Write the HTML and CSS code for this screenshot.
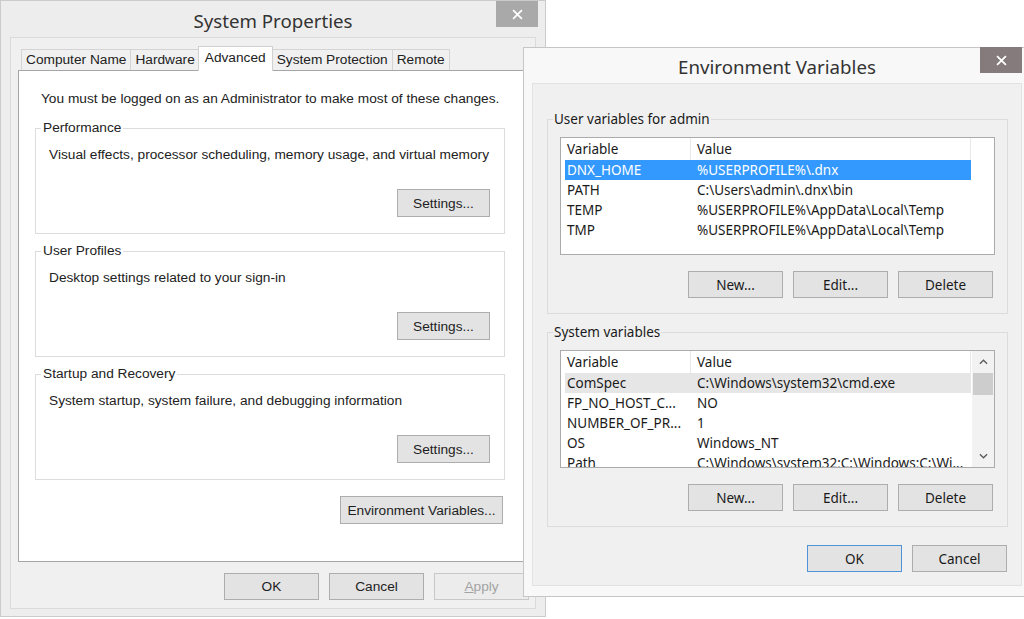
FILE: index.html
```html
<!DOCTYPE html>
<html lang="en">
<head>
<meta charset="utf-8">
<title>System Properties - Environment Variables</title>
<link rel="stylesheet" href="styles.css">
</head>
<body>
<div class="desktop">

  <section class="window sp">
    <header class="titlebar">
      <span></span>
      <h1 class="title">System Properties</h1>
      <button class="close" aria-label="Close"><svg viewBox="0 0 10 10"><path d="M1 1L9 9M9 1L1 9"/></svg></button>
    </header>
    <div class="client">
      <div class="tabs">
        <span class="tab">Computer Name</span>
        <span class="tab">Hardware</span>
        <span class="tab active">Advanced</span>
        <span class="tab">System Protection</span>
        <span class="tab">Remote</span>
      </div>
      <div class="panel">
        <p class="note">You must be logged on as an Administrator to make most of these changes.</p>
        <fieldset class="group">
          <legend>Performance</legend>
          <p>Visual effects, processor scheduling, memory usage, and virtual memory</p>
          <div class="group-actions"><button class="btn settings">Settings...</button></div>
        </fieldset>
        <fieldset class="group">
          <legend>User Profiles</legend>
          <p>Desktop settings related to your sign-in</p>
          <div class="group-actions"><button class="btn settings">Settings...</button></div>
        </fieldset>
        <fieldset class="group">
          <legend>Startup and Recovery</legend>
          <p>System startup, system failure, and debugging information</p>
          <div class="group-actions"><button class="btn settings">Settings...</button></div>
        </fieldset>
        <div class="env-row"><button class="btn env">Environment Variables...</button></div>
      </div>
      <div class="footer">
        <button class="btn">OK</button>
        <button class="btn">Cancel</button>
        <button class="btn disabled"><u>A</u>pply</button>
      </div>
    </div>
  </section>

  <section class="window ev">
    <header class="titlebar">
      <span></span>
      <h1 class="title">Environment Variables</h1>
      <button class="close" aria-label="Close"><svg viewBox="0 0 10 10"><path d="M1 1L9 9M9 1L1 9"/></svg></button>
    </header>
    <div class="client">
      <fieldset class="vgroup">
        <legend>User variables for admin</legend>
        <div class="list">
          <div class="list-body">
            <div class="list-head"><span class="c1">Variable</span><span class="c2">Value</span></div>
            <div class="row sel"><span class="c1">DNX_HOME</span><span class="c2">%USERPROFILE%\.dnx</span></div>
            <div class="row"><span class="c1">PATH</span><span class="c2">C:\Users\admin\.dnx\bin</span></div>
            <div class="row"><span class="c1">TEMP</span><span class="c2">%USERPROFILE%\AppData\Local\Temp</span></div>
            <div class="row"><span class="c1">TMP</span><span class="c2">%USERPROFILE%\AppData\Local\Temp</span></div>
          </div>
        </div>
        <div class="actions">
          <button class="btn2">New...</button>
          <button class="btn2">Edit...</button>
          <button class="btn2">Delete</button>
        </div>
      </fieldset>
      <fieldset class="vgroup">
        <legend>System variables</legend>
        <div class="list">
          <div class="list-body">
            <div class="list-head"><span class="c1">Variable</span><span class="c2">Value</span></div>
            <div class="row dim"><span class="c1">ComSpec</span><span class="c2">C:\Windows\system32\cmd.exe</span></div>
            <div class="row"><span class="c1">FP_NO_HOST_C...</span><span class="c2">NO</span></div>
            <div class="row"><span class="c1">NUMBER_OF_PR...</span><span class="c2">1</span></div>
            <div class="row"><span class="c1">OS</span><span class="c2">Windows_NT</span></div>
            <div class="row"><span class="c1">Path</span><span class="c2">C:\Windows\system32;C:\Windows;C:\Wi...</span></div>
          </div>
          <div class="scrollbar">
            <span class="arrow"><svg viewBox="0 0 10 6"><path d="M1 5L5 1L9 5"/></svg></span>
            <span class="thumb"></span>
            <span class="track"></span>
            <span class="arrow"><svg viewBox="0 0 10 6"><path d="M1 1L5 5L9 1"/></svg></span>
          </div>
        </div>
        <div class="actions">
          <button class="btn2">New...</button>
          <button class="btn2">Edit...</button>
          <button class="btn2">Delete</button>
        </div>
      </fieldset>
      <div class="footer2">
        <button class="btn2 default">OK</button>
        <button class="btn2">Cancel</button>
      </div>
    </div>
  </section>

</div>
</body>
</html>
```

FILE: styles.css
```css
html, body {
  margin: 0;
  padding: 0;
  background: #ffffff;
  overflow: hidden;
}

.desktop {
  position: relative;
  width: 1024px;
  height: 619px;
  overflow: hidden;
  background: #ffffff;
}

/* ---------- generic window ---------- */
.window {
  position: absolute;
  box-sizing: border-box;
  display: flex;
  flex-direction: column;
  border: 1px solid #cbcbcb;
}

.titlebar {
  display: grid;
  grid-template-columns: 1fr auto 1fr;
  flex: none;
}

.title {
  margin: 0;
  font-family: "Noto Sans", "Open Sans", sans-serif;
  font-weight: 400;
  font-size: 18.7px;
  line-height: 26px;
  color: #333333;
  white-space: nowrap;
}

.close {
  justify-self: end;
  align-self: start;
  width: 42px;
  height: 26px;
  padding: 0;
  border: none;
  display: flex;
  align-items: center;
  justify-content: center;
}

.close svg {
  width: 11px;
  height: 11px;
  stroke: #ffffff;
  stroke-width: 1.6;
  fill: none;
}

/* ---------- System Properties ---------- */
.sp {
  left: 0;
  top: 0;
  width: 546px;
  height: 617px;
  background: #ededed;
  font-family: "Liberation Sans", Arial, sans-serif;
  font-size: 13.7px;
  color: #222222;
}

.sp .titlebar {
  height: 36px;
}

.sp .title {
  margin-top: 7px;
}

.sp .close {
  background: #a9a9a9;
  margin-right: 7px;
}

.sp .client {
  flex: 1;
  margin: 0 9px 7px 9px;
  box-sizing: border-box;
  background: #f0f0f0;
  border: 1px solid #dadada;
  padding: 9px 0 0 7px;
  display: flex;
  flex-direction: column;
}

.tabs {
  display: flex;
  align-items: flex-end;
  padding-left: 3px;
  height: 23px;
  flex: none;
}

.tab {
  box-sizing: border-box;
  height: 21px;
  line-height: 20px;
  padding: 0 4px;
  border: 1px solid #d4d4d4;
  border-bottom: none;
  margin-right: -1px;
  background: #f0f0f0;
  white-space: nowrap;
  color: #222222;
}

.tab.active {
  position: relative;
  z-index: 1;
  height: 25px;
  line-height: 20px;
  margin-bottom: -1px;
  margin-left: -1px;
  margin-right: -1px;
  padding: 1px 6px 3px;
  background: #ffffff;
  border-color: #d0d0d0;
}

.panel {
  box-sizing: border-box;
  width: 512px;
  height: 492px;
  flex: none;
  border: 1px solid #a6a6a6;
  background: #ffffff;
  padding: 20px 0 0 16px;
}

.note {
  margin: 0 0 13px 6px;
  line-height: 16px;
  white-space: nowrap;
}

.group {
  box-sizing: border-box;
  width: 470px;
  margin: 0 0 9px 0;
  padding: 11px 5px 16px 5px;
  border: 1px solid #dcdcdc;
  min-inline-size: 0;
}

.group legend {
  padding: 0 2px;
  line-height: 16px;
}

.group p {
  margin: 0 0 26px 8px;
  line-height: 16px;
  white-space: nowrap;
}

.group-actions {
  display: flex;
  justify-content: flex-end;
  padding-right: 9px;
}

.btn {
  box-sizing: border-box;
  font: inherit;
  color: #1e1e1e;
  background: #e3e3e3;
  border: 1px solid #adadad;
  height: 28px;
  padding: 0;
  margin: 0;
}

.settings {
  width: 93px;
}

.env-row {
  width: 470px;
  display: flex;
  justify-content: flex-end;
  padding-top: 7px;
}

.env {
  width: 163px;
  margin-right: 2px;
}

.footer {
  display: flex;
  gap: 10px;
  padding: 11px 0 0 206px;
}

.footer .btn {
  width: 95px;
  height: 27px;
}

.btn.disabled {
  color: #a3a3a3;
  background: #ececec;
  border-color: #c8c8c8;
}

/* ---------- Environment Variables ---------- */
.ev {
  left: 523px;
  top: 47px;
  width: 508px;
  height: 550px;
  background: #f8f8f8;
  border-color: #c6c6c6;
  font-family: "Noto Sans", "Open Sans", sans-serif;
  font-size: 13.5px;
  color: #1a1a1a;
}

.ev .titlebar {
  height: 35px;
}

.ev .title {
  margin-top: 6px;
}

.ev .close {
  background: #867b7c;
  margin-right: 8px;
  height: 26px;
  margin-top: -1px;
}

.ev .client {
  flex: 1;
  margin: 0 8px 10px 8px;
  box-sizing: border-box;
  background: #f0f0f0;
  border: 1px solid #e2e2e2;
  padding: 25px 14px 0 14px;
  display: flex;
  flex-direction: column;
}

.vgroup {
  box-sizing: border-box;
  width: 461px;
  margin: 0 0 8px 0;
  padding: 0 5px 15px 5px;
  border: 1px solid #dcdcdc;
  min-inline-size: 0;
}

.vgroup legend {
  padding: 0 1px;
  line-height: 20px;
}

.list {
  box-sizing: border-box;
  height: 118px;
  margin: 8px 7px 0 7px;
  border: 1px solid #ababab;
  background: #ffffff;
  display: flex;
  overflow: hidden;
}

.list-body {
  flex: 1;
  padding-left: 4px;
  overflow: hidden;
}

.list-head,
.row {
  display: flex;
  width: 406px;
  white-space: nowrap;
}

.list-head {
  height: 22px;
  line-height: 22px;
}

.list-head span {
  box-sizing: border-box;
  border-right: 1px solid #e8e8e8;
}

.row {
  height: 20px;
  line-height: 20px;
}

.c1 {
  width: 126px;
  padding-left: 2px;
  box-sizing: border-box;
  overflow: hidden;
}

.c2 {
  width: 280px;
  padding-left: 6px;
  box-sizing: border-box;
  overflow: hidden;
}

.row.sel {
  background: #3399ff;
  color: #ffffff;
}

.row.dim {
  background: #e6e6e6;
}

.scrollbar {
  width: 22px;
  flex: none;
  background: #f2f2f2;
  display: flex;
  flex-direction: column;
}

.scrollbar .arrow {
  height: 22px;
  display: flex;
  align-items: center;
  justify-content: center;
  flex: none;
}

.scrollbar .arrow svg {
  width: 9px;
  height: 6px;
  stroke: #5a5a5a;
  stroke-width: 1.4;
  fill: none;
}

.scrollbar .thumb {
  height: 22px;
  margin: 0 1px;
  background: #cdcdcd;
  flex: none;
}

.scrollbar .track {
  flex: 1;
}

.actions {
  display: flex;
  justify-content: flex-end;
  gap: 10px;
  padding: 16px 9px 0 0;
}

.btn2 {
  box-sizing: border-box;
  font: inherit;
  color: #1a1a1a;
  background: #e3e3e3;
  border: 1px solid #adadad;
  width: 95px;
  height: 27px;
  padding: 0;
  margin: 0;
}

.footer2 {
  display: flex;
  justify-content: flex-end;
  gap: 10px;
  padding-top: 10px;
}

.btn2.default {
  border-color: #4f94d9;
}
```
